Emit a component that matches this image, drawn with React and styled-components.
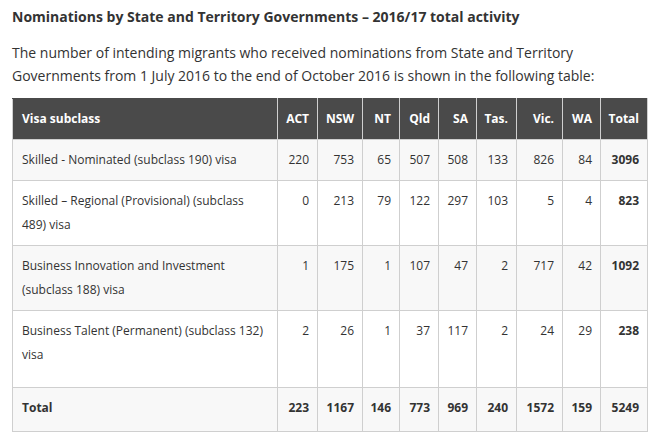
import React from "react";
import styled, { createGlobalStyle } from "styled-components";

const Global = createGlobalStyle`
  html, body { margin: 0; padding: 0; background: #fff; }
  body { font-family: "Open Sans", "Liberation Sans", sans-serif; color: #333; }
`;

const Page = styled.div`
  padding: 0 8px 0 12px;
  width: 655px;
  box-sizing: border-box;
`;

const Heading = styled.h3`
  margin: 0;
  padding-top: 7px;
  font-size: 14px;
  line-height: 20px;
  font-weight: 700;
  color: #333;
`;

const Intro = styled.p`
  margin: 14px 0 0;
  font-size: 14px;
  line-height: 23px;
  color: #333;
`;

const Table = styled.table`
  margin-top: 11px;
  width: 635px;
  border-collapse: collapse;
  table-layout: fixed;
  font-size: 12px;
  line-height: 24px;
  border: 1px solid #cfcfcf;
`;

const Th = styled.th`
  background: #4a4a4a;
  color: #fff;
  font-weight: 700;
  text-align: ${(p) => (p.$left ? "left" : "right")};
  padding: 8px 8px 8px ${(p) => (p.$left ? "9px" : "4px")};
  border: 1px solid #cfcfcf;
  border-top-color: #4a4a4a;
  vertical-align: top;
  height: 24px;
  white-space: nowrap;
`;

const Tr = styled.tr`
  background: ${(p) => (p.$shade ? "#f8f8f8" : "#fff")};
  height: ${(p) => p.$h}px;
`;

const Td = styled.td`
  text-align: ${(p) => (p.$left ? "left" : "right")};
  font-weight: ${(p) => (p.$bold ? 700 : 400)};
  padding: 8px 8px 8px ${(p) => (p.$left ? "9px" : "4px")};
  border: 1px solid #cfcfcf;
  vertical-align: top;
  color: #333;
`;

const cols = ["ACT", "NSW", "NT", "Qld", "SA", "Tas.", "Vic.", "WA", "Total"];
const widths = [265, 40, 45, 37, 39, 38, 40, 46, 38, 47];

const rows = [
  { name: "Skilled - Nominated (subclass 190) visa", v: [220, 753, 65, 507, 508, 133, 826, 84, 3096], h: 41 },
  { name: "Skilled – Regional (Provisional) (subclass 489) visa", v: [0, 213, 79, 122, 297, 103, 5, 4, 823], h: 65 },
  { name: "Business Innovation and Investment (subclass 188) visa", v: [1, 175, 1, 107, 47, 2, 717, 42, 1092], h: 65 },
  { name: "Business Talent (Permanent) (subclass 132) visa", v: [2, 26, 1, 37, 117, 2, 24, 29, 238], h: 77 },
];
const total = [223, 1167, 146, 773, 969, 240, 1572, 159, 5249];

export default function App() {
  return (
    <Page>
      <Global />
      <Heading>Nominations by State and Territory Governments – 2016/17 total activity</Heading>
      <Intro>
        The number of intending migrants who received nominations from State and Territory
        Governments from 1 July 2016 to the end of October 2016 is shown in the following table:
      </Intro>
      <Table>
        <colgroup>
          {widths.map((w, i) => (
            <col key={i} style={{ width: w }} />
          ))}
        </colgroup>
        <thead>
          <tr>
            <Th $left>Visa subclass</Th>
            {cols.map((c) => (
              <Th key={c}>{c}</Th>
            ))}
          </tr>
        </thead>
        <tbody>
          {rows.map((r, i) => (
            <Tr key={r.name} $h={r.h} $shade={i % 2 === 0}>
              <Td $left>{r.name}</Td>
              {r.v.map((n, j) => (
                <Td key={j} $bold={j === 8}>{n}</Td>
              ))}
            </Tr>
          ))}
          <Tr $h={44} $shade>
            <Td $left $bold>Total</Td>
            {total.map((n, j) => (
              <Td key={j} $bold>{n}</Td>
            ))}
          </Tr>
        </tbody>
      </Table>
    </Page>
  );
}
